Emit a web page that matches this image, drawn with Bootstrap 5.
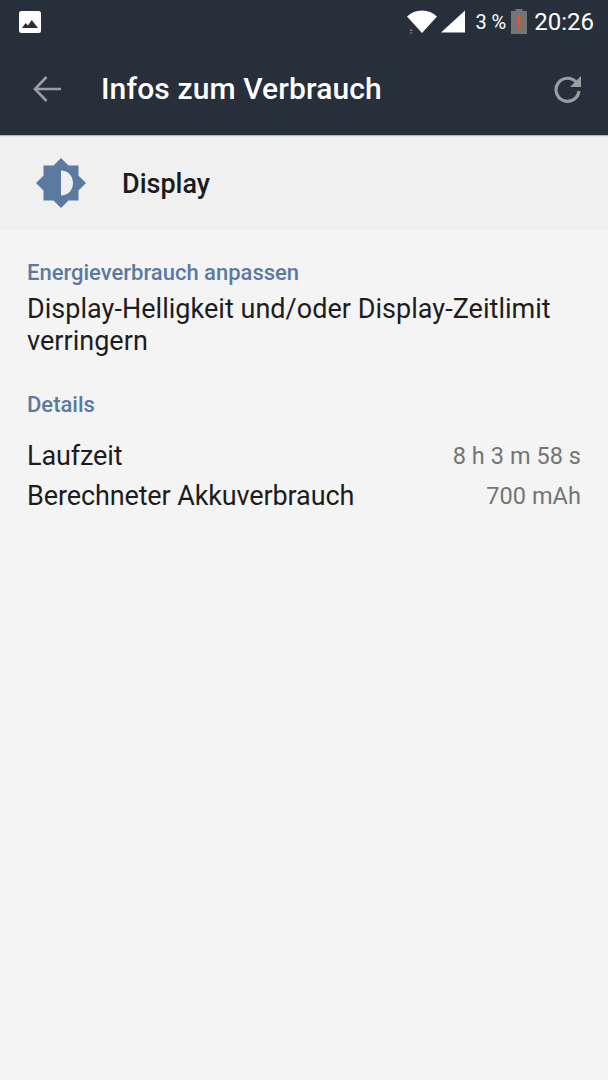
<!DOCTYPE html>
<html lang="de">
<head>
<meta charset="utf-8">
<title>Infos zum Verbrauch</title>
<link rel="stylesheet" href="https://cdn.jsdelivr.net/npm/bootstrap@5.3.0/dist/css/bootstrap.min.css">
<style>
html,body{height:100%}
body{background:#f4f4f4;font-family:Roboto,"Liberation Sans",sans-serif;color:#1d1d1d;width:608px;min-height:1080px;overflow:hidden}
.top-area{background:#272f3a;height:135px;box-shadow:0 1px 1px rgba(0,0,0,.25)}
.status-row{height:43px;padding:0 14px 0 19px;color:#fff}
.status-pct{font-size:20px;line-height:1;margin:0 5px 0 10px}
.status-time{font-size:24px;line-height:1;margin-left:7px}
.app-row{height:92px;padding:0 25px 0 32px}
.app-title{font-size:30px;font-weight:500;color:#fff;margin:0 0 0 39px;line-height:1;letter-spacing:.12px;flex:1}
.item-head{background:#f0f0f0;height:95px;padding-left:35px}
.item-name{font-size:27px;font-weight:500;margin:3px 0 0 35px;line-height:1;color:#1c1c1c}
.content-area{padding:31px 27px 0 27px}
.sec-label{font-size:22px;font-weight:500;color:#5b7aa0;line-height:24px}
.tip-text{font-size:27px;line-height:32px;margin:8px 0 0 0;letter-spacing:.03px}
.details-label{margin-top:36px}
.det-rows{margin-top:23px}
.det-row{height:40px}
.det-key{font-size:27px;line-height:32px;letter-spacing:-.12px}
.det-val{font-size:23.5px;line-height:32px;color:#757575;letter-spacing:.05px}
</style>
</head>
<body>
<header class="top-area position-relative">
  <div class="status-row d-flex align-items-center">
    <svg width="22" height="22" viewBox="0 0 22 22" aria-hidden="true"><rect width="22" height="22" rx="2.5" fill="#fff"/><path d="M3 17l3.6-5 2.4 2.6L12.7 9 19 17z" fill="#272f3a"/></svg>
    <span class="ms-auto d-flex align-items-center">
      <svg width="30" height="24" viewBox="0 0 30 24" aria-hidden="true"><path d="M0 6.500C4 2.600 9 .5 15 .5s11 2.100 15 6L15 23z" fill="#fff"/><path d="M2.500 21l1.500-2 1.500 2zM2.500 22.500l1.500 1.500 1.500-1.500z" fill="#8a8e93"/></svg>
      <svg width="24" height="23" viewBox="0 0 25 23" class="ms-1" aria-hidden="true"><path d="M0 23L25 0v23z" fill="#fff"/></svg>
      <span class="status-pct">3 %</span>
      <svg width="16" height="25" viewBox="0 0 16 25" aria-hidden="true"><path d="M4.500 0h7v2H16v23H0V2h4.500z" fill="#757575"/><rect x="6.800" y="6" width="2.600" height="10" fill="#e8532a"/><rect x="6.800" y="18" width="2.600" height="3" fill="#e8532a"/></svg>
      <span class="status-time">20:26</span>
    </span>
  </div>
  <div class="app-row d-flex align-items-center">
    <svg width="30" height="30" viewBox="0 0 30 30" aria-hidden="true"><path d="M29 15H4M14.500 3L3 15l11.500 12" fill="none" stroke="#9a9ea3" stroke-width="2.600"/></svg>
    <h1 class="app-title">Infos zum Verbrauch</h1>
    <svg width="30" height="30" viewBox="0 0 30 30" aria-hidden="true"><path d="M23.500 8.500A11.500 11.500 0 1 0 26 17" fill="none" stroke="#9a9ea3" stroke-width="3.200"/><path d="M28 2v11H17z" fill="#9a9ea3"/></svg>
  </div>
</header>
<section class="item-head d-flex align-items-center">
  <svg width="52" height="52" viewBox="0 0 52 52" aria-hidden="true"><path fill-rule="evenodd" d="M26 1l7.500 7.500H43.500V18.500L51 26l-7.500 7.500V43.500H33.500L26 51l-7.500-7.500H8.500V33.500L1 26l7.500-7.500V8.500H18.500zM26 13.500c7 0 12 5.500 12 12.500s-5 12.500-12 12.500z" fill="#5b7aa0"/></svg>
  <span class="item-name">Display</span>
</section>
<main class="content-area">
  <div class="sec-label">Energieverbrauch anpassen</div>
  <p class="tip-text">Display-Helligkeit und/oder Display-Zeitlimit verringern</p>
  <div class="sec-label details-label">Details</div>
  <div class="det-rows">
    <div class="det-row d-flex justify-content-between"><span class="det-key">Laufzeit</span><span class="det-val">8 h 3 m 58 s</span></div>
    <div class="det-row d-flex justify-content-between"><span class="det-key">Berechneter Akkuverbrauch</span><span class="det-val">700 mAh</span></div>
  </div>
</main>
<script src="https://cdn.jsdelivr.net/npm/bootstrap@5.3.0/dist/js/bootstrap.bundle.min.js"></script>
</body>
</html>
